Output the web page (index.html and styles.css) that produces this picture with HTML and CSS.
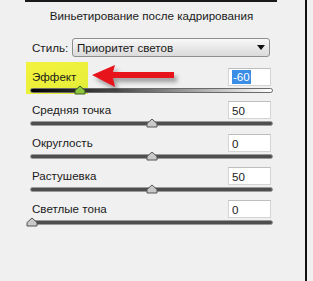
FILE: index.html
```html
<!DOCTYPE html>
<html lang="ru">
  <head>
    <meta charset="UTF-8" />
    <title>Виньетирование после кадрирования</title>
    <link rel="stylesheet" href="styles.css">
  </head>
  <body>
    <div class="panel">
      <div class="content">
        <div class="title">Виньетирование после кадрирования</div>

        <div class="style-row">
          <span class="label">Стиль:</span>
          <div class="select">
            <span>Приоритет светов</span>
            <span class="caret"></span>
          </div>
        </div>

        <div class="param effect">
          <div class="mark"></div>
          <div class="param-head">
            <span class="label">Эффект</span>
            <span class="field"><span class="sel">-60</span></span>
          </div>
          <div class="slider">
            <div class="track"></div>
            <div class="rail">
              <svg class="thumb" style="left: 20%" width="12" height="10" viewBox="0 0 12 10">
                <path d="M1 9 L1 5.5 L6 1 L11 5.5 L11 9 Z" fill="#8cc63a" stroke="#3f5a1e" stroke-width="1" stroke-linejoin="round" />
              </svg>
            </div>
          </div>
          <svg class="arrow" width="96" height="30" viewBox="0 0 96 30">
            <path d="M4 13 L27 3 L25 10 L86 10 L86 16 L25 16 L27 25 Z" fill="#e8141c" />
          </svg>
        </div>

        <div class="param">
          <div class="param-head">
            <span class="label">Средняя точка</span>
            <span class="field">50</span>
          </div>
          <div class="slider">
            <div class="track"></div>
            <div class="rail">
              <svg class="thumb" style="left: 50%" width="12" height="10" viewBox="0 0 12 10">
                <path d="M1 9 L1 5.5 L6 1 L11 5.5 L11 9 Z" fill="#c9c9c9" stroke="#555" stroke-width="1" stroke-linejoin="round" />
              </svg>
            </div>
          </div>
        </div>

        <div class="param">
          <div class="param-head">
            <span class="label">Округлость</span>
            <span class="field">0</span>
          </div>
          <div class="slider">
            <div class="track"></div>
            <div class="rail">
              <svg class="thumb" style="left: 50%" width="12" height="10" viewBox="0 0 12 10">
                <path d="M1 9 L1 5.5 L6 1 L11 5.5 L11 9 Z" fill="#c9c9c9" stroke="#555" stroke-width="1" stroke-linejoin="round" />
              </svg>
            </div>
          </div>
        </div>

        <div class="param">
          <div class="param-head">
            <span class="label">Растушевка</span>
            <span class="field">50</span>
          </div>
          <div class="slider">
            <div class="track"></div>
            <div class="rail">
              <svg class="thumb" style="left: 50%" width="12" height="10" viewBox="0 0 12 10">
                <path d="M1 9 L1 5.5 L6 1 L11 5.5 L11 9 Z" fill="#c9c9c9" stroke="#555" stroke-width="1" stroke-linejoin="round" />
              </svg>
            </div>
          </div>
        </div>

        <div class="param">
          <div class="param-head">
            <span class="label">Светлые тона</span>
            <span class="field">0</span>
          </div>
          <div class="slider">
            <div class="track"></div>
            <div class="rail">
              <svg class="thumb" style="left: 0%" width="12" height="10" viewBox="0 0 12 10">
                <path d="M1 9 L1 5.5 L6 1 L11 5.5 L11 9 Z" fill="#c9c9c9" stroke="#555" stroke-width="1" stroke-linejoin="round" />
              </svg>
            </div>
          </div>
        </div>
      </div>
    </div>
  </body>
</html>
```

FILE: styles.css
```css
* {
  margin: 0;
  padding: 0;
  box-sizing: border-box;
}

body {
  width: 313px;
  height: 281px;
  overflow: hidden;
  background-color: #f0f0f0;
  color: #1a1a1a;
  font-family: "Liberation Sans", Arial, sans-serif;
  font-size: 11.6px;
}

.panel {
  width: 307px;
  height: 281px;
  border-right: 2px solid #111;
}

.content {
  margin-left: 25px;
  width: 252px;
  padding: 0 4px 0 5px;
  border-top: 2px solid #1a1a1a;
}

.title {
  margin-top: 7px;
  line-height: 14px;
  text-align: center;
}

.label {
  padding-left: 2px;
  line-height: 14px;
}

.style-row {
  margin-top: 15px;
  padding-right: 3px;
  display: flex;
  justify-content: space-between;
  align-items: center;
}

.select {
  width: 198px;
  height: 19px;
  padding: 0 4px;
  border: 1px solid #8e8f8f;
  border-radius: 3px;
  background: linear-gradient(#f8f8f8, #dadada);
  display: flex;
  justify-content: space-between;
  align-items: center;
}

.caret {
  width: 0;
  height: 0;
  border-left: 4px solid transparent;
  border-right: 4px solid transparent;
  border-top: 5px solid #111;
}

.param {
  position: relative;
  margin-top: 7px;
}

.param.effect {
  margin-top: 11px;
}

.param-head {
  position: relative;
  padding-right: 2px;
  display: flex;
  justify-content: space-between;
  align-items: center;
}

.field {
  width: 43px;
  height: 18px;
  padding: 0 3px;
  background-color: #fff;
  border: 1px solid #d4d4d4;
  border-top-color: #bdbdbd;
  display: flex;
  align-items: center;
}

.sel {
  padding: 0 1px;
  line-height: 14px;
  color: #fff;
  background-color: #3a8ee6;
}

.slider {
  position: relative;
  height: 8px;
}

.track {
  position: absolute;
  left: 0;
  right: 0;
  top: 2px;
  height: 5px;
  border: 1px solid #9a9a9a;
  border-radius: 3px;
  background-color: #4e4e4e;
}

.effect .track {
  border-color: #6a6a6a;
  background: linear-gradient(to right, #000, #555 40%, #c8c8c8 80%, #fff);
}

.rail {
  position: absolute;
  left: 2px;
  right: 1px;
  top: -1px;
  height: 10px;
}

.thumb {
  position: absolute;
  top: 0;
  margin-left: -6px;
}

.mark {
  position: absolute;
  left: -4px;
  top: -6px;
  width: 62px;
  height: 32px;
  background: linear-gradient(160deg, #f3f33c, #e9ef3a 70%, #d6ec3a);
}

.arrow {
  position: absolute;
  left: 58px;
  top: -6px;
  filter: drop-shadow(3px 4px 2px rgba(0, 0, 0, 0.35));
}
```
